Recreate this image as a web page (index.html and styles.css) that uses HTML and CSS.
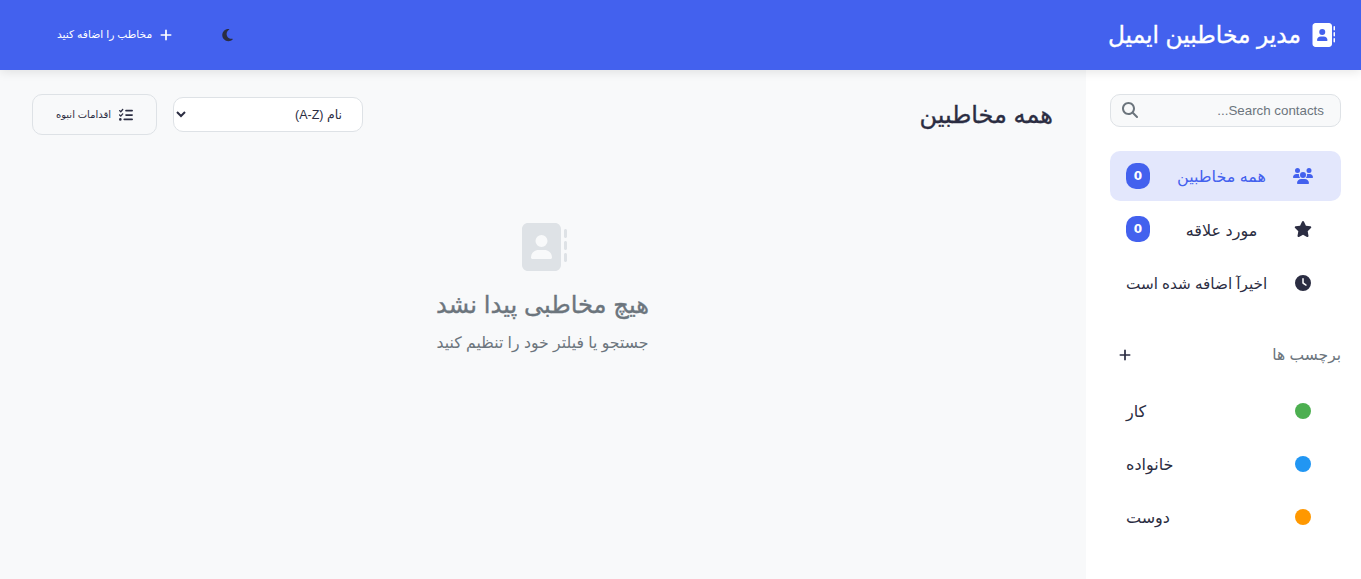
FILE: index.html
```html
<!DOCTYPE html>
<html lang="fa" dir="rtl">
<head>
<meta charset="utf-8">
<title>مدیر مخاطبین ایمیل</title>
<link rel="stylesheet" href="styles.css">
</head>
<body>
<svg class="sprite" aria-hidden="true">
  <symbol id="i-book" viewBox="0 0 512 512"><path d="M96 0C60.7 0 32 28.7 32 64V448c0 35.3 28.7 64 64 64H384c35.3 0 64-28.7 64-64V64c0-35.3-28.7-64-64-64H96zM208 288h64c44.2 0 80 35.8 80 80c0 8.8-7.2 16-16 16H144c-8.8 0-16-7.2-16-16c0-44.2 35.8-80 80-80zm-32-96a64 64 0 1 1 128 0 64 64 0 1 1 -128 0zM512 80c0-8.8-7.2-16-16-16s-16 7.2-16 16v64c0 8.8 7.2 16 16 16s16-7.2 16-16V80zM496 192c-8.8 0-16 7.2-16 16v64c0 8.8 7.2 16 16 16s16-7.2 16-16V208c0-8.8-7.2-16-16-16zm16 144c0-8.8-7.2-16-16-16s-16 7.2-16 16v64c0 8.8 7.2 16 16 16s16-7.2 16-16V336z"/></symbol>
  <symbol id="i-plus" viewBox="0 0 448 512"><path d="M256 80c0-17.7-14.3-32-32-32s-32 14.3-32 32V224H48c-17.7 0-32 14.3-32 32s14.3 32 32 32H192V432c0 17.7 14.3 32 32 32s32-14.3 32-32V288H400c17.7 0 32-14.3 32-32s-14.3-32-32-32H256V80z"/></symbol>
  <symbol id="i-moon" viewBox="0 0 384 512"><path d="M223.5 32C100 32 0 132.3 0 256S100 480 223.5 480c60.6 0 115.5-24.2 155.8-63.4c5-4.9 6.3-12.5 3.1-18.7s-10.1-9.7-17-8.5c-9.8 1.7-19.8 2.6-30.1 2.6c-96.9 0-175.5-78.8-175.5-176c0-65.8 36-123.1 89.3-153.3c6.1-3.5 9.2-10.5 7.7-17.3s-7.3-11.9-14.3-12.5c-6.3-.5-12.6-.8-19-.8z"/></symbol>
  <symbol id="i-search" viewBox="0 0 512 512"><path d="M416 208c0 45.9-14.9 88.3-40 122.7L502.6 457.4c12.5 12.5 12.5 32.8 0 45.3s-32.8 12.5-45.3 0L330.7 376c-34.4 25.2-76.8 40-122.7 40C93.1 416 0 322.9 0 208S93.1 0 208 0S416 93.1 416 208zM208 352a144 144 0 1 0 0-288 144 144 0 1 0 0 288z"/></symbol>
  <symbol id="i-users" viewBox="0 0 640 512"><path d="M144 0a80 80 0 1 1 0 160A80 80 0 1 1 144 0zM512 0a80 80 0 1 1 0 160A80 80 0 1 1 512 0zM0 298.7C0 239.8 47.8 192 106.7 192h42.7c15.9 0 31 3.5 44.6 9.7c-1.3 7.2-1.9 14.7-1.9 22.3c0 38.2 16.8 72.5 43.3 96c-.2 0-.4 0-.7 0H21.3C9.6 320 0 310.4 0 298.7zM405.3 320c-.2 0-.4 0-.7 0c26.6-23.5 43.3-57.8 43.3-96c0-7.6-.7-15-1.9-22.3c13.6-6.3 28.7-9.7 44.6-9.7h42.7C592.2 192 640 239.8 640 298.7c0 11.8-9.6 21.3-21.3 21.3H405.3zM224 224a96 96 0 1 1 192 0 96 96 0 1 1 -192 0zM128 485.3C128 411.7 187.7 352 261.3 352H378.7C452.3 352 512 411.7 512 485.3c0 14.7-11.9 26.7-26.7 26.7H154.7c-14.7 0-26.7-11.9-26.7-26.7z"/></symbol>
  <symbol id="i-star" viewBox="0 0 576 512"><path d="M316.9 18C311.6 7 300.4 0 288.1 0s-23.4 7-28.8 18L195 150.3 51.4 171.5c-12 1.8-22 10.2-25.7 21.7s-.7 24.2 7.9 32.7L137.8 329 113.2 474.7c-2 12 3 24.2 12.9 31.3s23 8 33.8 2.3l128.3-68.5 128.3 68.5c10.8 5.7 23.9 4.9 33.8-2.3s14.9-19.3 12.9-31.3L438.5 329 542.7 225.9c8.6-8.5 11.7-21.2 7.9-32.7s-13.7-19.9-25.7-21.7L381.2 150.3 316.9 18z"/></symbol>
  <symbol id="i-clock" viewBox="0 0 512 512"><path d="M256 0a256 256 0 1 1 0 512A256 256 0 1 1 256 0zM232 120V256c0 8 4 15.5 10.7 20l96 64c11 7.4 25.9 4.4 33.3-6.7s4.4-25.9-6.7-33.3L280 243.2V120c0-13.3-10.7-24-24-24s-24 10.7-24 24z"/></symbol>
  <symbol id="i-list" viewBox="0 0 512 512"><path d="M152.1 38.2c9.9 8.9 10.7 24 1.8 33.9l-72 80c-4.4 4.9-10.6 7.8-17.2 7.9s-12.9-2.4-17.6-7L7 113C-2.3 103.6-2.3 88.4 7 79s24.6-9.4 33.9 0l22.1 22.1 55.1-61.2c8.9-9.9 24-10.7 33.9-1.8zm0 160c9.9 8.9 10.7 24 1.8 33.9l-72 80c-4.4 4.9-10.6 7.8-17.2 7.9s-12.9-2.4-17.6-7L7 273c-9.4-9.4-9.4-24.6 0-33.9s24.6-9.4 33.9 0l22.1 22.1 55.1-61.2c8.9-9.9 24-10.7 33.9-1.8zM224 96c0-17.7 14.3-32 32-32H480c17.7 0 32 14.3 32 32s-14.3 32-32 32H256c-17.7 0-32-14.3-32-32zm0 160c0-17.7 14.3-32 32-32H480c17.7 0 32 14.3 32 32s-14.3 32-32 32H256c-17.7 0-32-14.3-32-32zM160 416c0-17.7 14.3-32 32-32H480c17.7 0 32 14.3 32 32s-14.3 32-32 32H192c-17.7 0-32-14.3-32-32zM48 368a48 48 0 1 1 0 96 48 48 0 1 1 0-96z"/></symbol>
</svg>
<header class="topbar">
  <h1 class="brand"><svg class="brand-icon"><use href="#i-book"/></svg>مدیر مخاطبین ایمیل</h1>
  <div class="top-actions">
    <button class="theme-btn" type="button" aria-label="theme"><svg class="moon"><use href="#i-moon"/></svg></button>
    <button class="add-btn" type="button"><svg class="plus"><use href="#i-plus"/></svg>مخاطب را اضافه کنید</button>
  </div>
</header>
<div class="layout">
  <aside class="sidebar">
    <div class="search">
      <input class="search-input" type="text" placeholder="Search contacts...">
      <svg class="search-icon"><use href="#i-search"/></svg>
    </div>
    <nav class="nav">
      <a class="nav-item active"><svg class="nav-icon"><use href="#i-users"/></svg><span class="label">همه مخاطبین</span><span class="badge">0</span></a>
      <a class="nav-item"><svg class="nav-icon"><use href="#i-star"/></svg><span class="label">مورد علاقه</span><span class="badge">0</span></a>
      <a class="nav-item"><svg class="nav-icon"><use href="#i-clock"/></svg><span class="label label-tight">اخیرآ اضافه شده است</span></a>
    </nav>
    <div class="tags-head"><span>برچسب ها</span><button class="tag-add" type="button" aria-label="add"><svg class="tag-plus"><use href="#i-plus"/></svg></button></div>
    <div class="tags">
      <a class="nav-item"><span class="dot-box"><span class="dot green"></span></span><span class="label">کار</span></a>
      <a class="nav-item"><span class="dot-box"><span class="dot blue"></span></span><span class="label">خانواده</span></a>
      <a class="nav-item"><span class="dot-box"><span class="dot orange"></span></span><span class="label">دوست</span></a>
    </div>
  </aside>
  <main class="main">
    <div class="main-head">
      <h2 class="main-title">همه مخاطبین</h2>
      <div class="controls">
        <select class="sort"><option>نام (A-Z)</option></select>
        <button class="bulk" type="button"><svg class="list-icon"><use href="#i-list"/></svg>اقدامات انبوه</button>
      </div>
    </div>
    <div class="empty">
      <svg class="empty-icon"><use href="#i-book"/></svg>
      <h3 class="empty-title">هیچ مخاطبی پیدا نشد</h3>
      <p class="empty-text">جستجو یا فیلتر خود را تنظیم کنید</p>
    </div>
  </main>
</div>
</body>
</html>
```
FILE: styles.css
```css
* { box-sizing: border-box; }
html, body { height: 100%; }
body {
  margin: 0;
  font-family: "Liberation Sans", "DejaVu Sans", sans-serif;
  color: #2b2d42;
  background: #f8f9fa;
  overflow: hidden;
  display: flex;
  flex-direction: column;
}
.sprite { display: none; }
svg { fill: currentColor; display: block; flex: none; }

.topbar {
  height: 70px;
  flex: none;
  background: #4361ee;
  color: #fff;
  display: flex;
  align-items: center;
  justify-content: space-between;
  padding: 0 26px 0 32px;
  box-shadow: 0 2px 10px rgba(0,0,0,.1);
  position: relative;
  z-index: 2;
}
.brand { margin: 0; display: flex; align-items: center; gap: 10px; font-size: 23.3px; font-weight: 400; -webkit-text-stroke: .35px currentColor; }
.brand-icon { width: 24px; height: 24px; }
.top-actions { display: flex; align-items: center; gap: 15px; }
.theme-btn { border: 0; background: none; padding: 8px; color: #2b2d42; width: 32px; height: 32px; display: flex; align-items: center; justify-content: center; }
.moon { width: 11px; height: 14px; }
.add-btn { border: 0; background: none; color: #fff; font: 10.7px "Liberation Sans", "DejaVu Sans", sans-serif; display: flex; align-items: center; gap: 7.5px; padding: 0 25px 2px 25px; }
.plus { width: 12px; height: 14px; margin-top: 2px; }

.layout { flex: 1; display: flex; min-height: 0; }
.sidebar { width: 275px; flex: none; background: #fff; padding: 24px 20px 24px 24px; }
.search { position: relative; }
.search-input {
  width: 100%; height: 33px; border: 1px solid #dee2e6; border-radius: 10px; background: #f8f9fa;
  padding: 0 16px 0 40px; font: 13.33px "Liberation Sans", sans-serif; color: #495057;
}
.search-input::placeholder { color: #6c757d; opacity: 1; }
.search-icon { position: absolute; left: 12px; top: 8px; width: 16px; height: 16px; color: #6c757d; }
.nav { margin-top: 24px; display: flex; flex-direction: column; gap: 4px; }
.nav-item {
  display: flex; align-items: center; justify-content: space-between;
  height: 49.5px; padding: 0 16px; border-radius: 10px; font-size: 16px; color: #2b2d42;
}
.label { padding-top: 2px; }
.label-tight { font-size: 15.2px; }
.nav-item.active { background: rgba(67,97,238,.15); color: #4361ee; }
.nav-icon { width: 20px; height: 16px; margin-right: 12px; }
.badge {
  width: 24px; height: 26px; border-radius: 10px; background: #4361ee; color: #fff;
  font-size: 12px; font-weight: 700; display: flex; align-items: center; justify-content: center;
  font-family: "DejaVu Sans", sans-serif;
}
.tags-head { display: flex; align-items: center; justify-content: space-between; margin-top: 31px; height: 32px; font-size: 15.5px; color: #6c757d; }
.tag-add { border: 0; background: none; padding: 0; margin-left: 9px; color: #2b2d42; }
.tag-plus { width: 12px; height: 14px; }
.tags { margin-top: 15.5px; display: flex; flex-direction: column; gap: 3.5px; }
.dot-box { width: 20px; margin-right: 12px; display: flex; justify-content: center; }
.dot { width: 16px; height: 16px; border-radius: 50%; }
.green { background: #4caf50; }
.blue { background: #2196f3; }
.orange { background: #ff9800; }

.main { flex: 1; min-width: 0; padding: 24px 33px 24px 32px; }
.main-head { display: flex; align-items: center; justify-content: space-between; height: 41px; }
.main-title { margin: 0; font-size: 24px; font-weight: 400; color: #2b2d42; -webkit-text-stroke: .35px currentColor; }
.controls { display: flex; align-items: center; gap: 16px; }
.sort { width: 190px; height: 35px; border: 1px solid #dee2e6; border-radius: 10px; background: #fff; padding: 0 16px; font: 12.5px "Liberation Sans", "DejaVu Sans", sans-serif; color: #2b2d42; }
.bulk { width: 125px; height: 41px; border: 1px solid #dee2e6; border-radius: 10px; background: #f8f9fa; color: #2b2d42; display: flex; align-items: center; justify-content: center; gap: 8px; font: 10px "Liberation Sans", "DejaVu Sans", sans-serif; }
.list-icon { width: 14px; height: 14px; }

.empty { margin-top: 88px; display: flex; flex-direction: column; align-items: center; color: #6c757d; }
.empty-icon { width: 48px; height: 48px; color: #dee2e6; }
.empty-title { margin: 20px 0 14px; font-size: 24.2px; font-weight: 400; -webkit-text-stroke: .35px currentColor; }
.empty-text { margin: 0; font-size: 15.7px; }
```
